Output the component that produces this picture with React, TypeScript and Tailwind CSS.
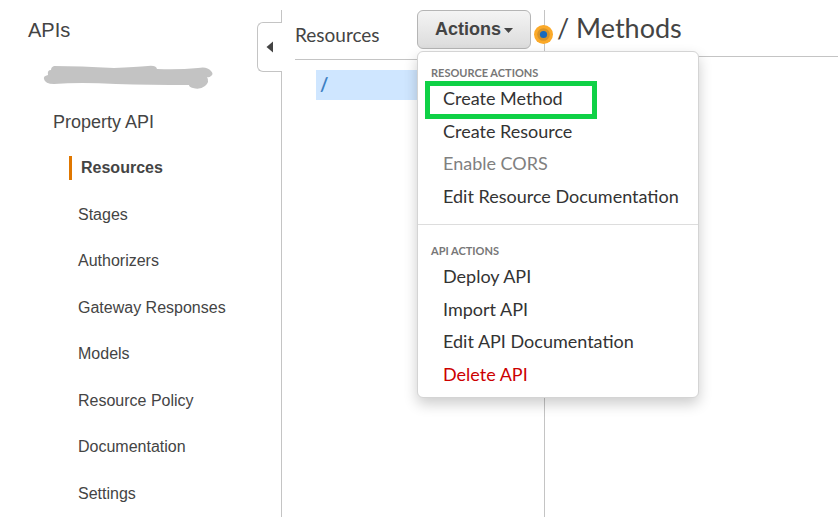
const navItems = [
  'Resources',
  'Stages',
  'Authorizers',
  'Gateway Responses',
  'Models',
  'Resource Policy',
  'Documentation',
  'Settings',
];

type MenuItem = { label: string; tone?: 'disabled' | 'danger'; marked?: boolean };

const menuSections: { title: string; items: MenuItem[] }[] = [
  {
    title: 'RESOURCE ACTIONS',
    items: [
      { label: 'Create Method', marked: true },
      { label: 'Create Resource' },
      { label: 'Enable CORS', tone: 'disabled' },
      { label: 'Edit Resource Documentation' },
    ],
  },
  {
    title: 'API ACTIONS',
    items: [
      { label: 'Deploy API' },
      { label: 'Import API' },
      { label: 'Edit API Documentation' },
      { label: 'Delete API', tone: 'danger' },
    ],
  },
];

function itemColor(tone?: MenuItem['tone']) {
  if (tone === 'disabled') return 'text-[#808080]';
  if (tone === 'danger') return 'text-[#cc0000]';
  return 'text-[#333333]';
}

function Sidebar() {
  return (
    <aside className="relative w-[282px] shrink-0 border-r border-[#c4c4c4] font-['Liberation_Sans',Arial,sans-serif] text-[#444444]">
      <h1 className="pt-2 pl-7 text-xl leading-6">APIs</h1>
      <svg className="mt-5 ml-10 block h-8 w-44" viewBox="0 0 176 32" aria-hidden="true">
        <path
          fill="#c3c3c3"
          d="M14 4 Q40 4 74 6 Q96 5 108 4 Q116 3 117 7 Q138 8 158 6 Q167 4 171 9 Q174 12 171 14 Q169 16 167 15 Q170 20 165 24 Q160 28 153 26 Q149 25 149 23 Q110 23 76 22 Q40 20 14 22 Q5 22 4 17 Q3 14 8 13 Q7 8 11 8 Q11 5 14 4Z"
        />
      </svg>
      <h2 className="mt-4 pl-[53px] text-lg leading-6">Property API</h2>
      <nav aria-label="Property API" className="mt-[22px] pl-[69px]">
        <ul className="flex h-[350px] flex-col justify-between">
          {navItems.map((label, i) => (
            <li key={label}>
              <a
                href="#"
                className={
                  i === 0
                    ? 'block border-l-3 border-[#e07700] pl-[9px] text-base leading-6 font-bold'
                    : 'block pl-[9px] text-base leading-6'
                }
              >
                {label}
              </a>
            </li>
          ))}
        </ul>
      </nav>
      <button
        type="button"
        aria-label="Collapse sidebar"
        className="absolute top-3 -right-px flex h-[50px] w-[25px] items-center rounded-l-md border border-r-0 border-[#c4c4c4] bg-white pl-2"
      >
        <svg className="h-[12px] w-[7px]" viewBox="0 0 7 12" aria-hidden="true">
          <path d="M7 0.5V11.5L0.5 6Z" fill="#444444" />
        </svg>
      </button>
    </aside>
  );
}

function ActionsMenu() {
  return (
    <div className="absolute top-[41px] left-[135px] z-10 w-[282px] rounded-md border border-[#d4d4d4] bg-white pt-[11px] pb-[7px] shadow-[0_6px_14px_rgba(0,0,0,0.2)]">
      {menuSections.map((section, s) => (
        <section
          key={section.title}
          className={s === 0 ? 'pb-3' : 'border-t border-[#dddddd] pt-4'}
        >
          <h3 className="h-[19px] pl-[13px] text-[11px] leading-5 font-bold text-[#777777]">
            {section.title}
          </h3>
          <ul className="grid h-[130px] grid-rows-4">
            {section.items.map((item) => (
              <li key={item.label} className="relative flex items-center">
                <button
                  type="button"
                  disabled={item.tone === 'disabled'}
                  className={`w-full pl-[25px] text-left text-lg leading-6 ${itemColor(item.tone)}`}
                >
                  {item.label}
                </button>
                {item.marked && (
                  <span className="pointer-events-none absolute -top-px left-[7px] h-[38px] w-[172px] border-5 border-[#0fd146]" />
                )}
              </li>
            ))}
          </ul>
        </section>
      ))}
    </div>
  );
}

function ResourcesPanel() {
  return (
    <section className="relative w-[263px] shrink-0 border-r border-[#c4c4c4] pl-[13px]">
      <header className="flex h-[50px] items-start justify-between border-b border-[#c4c4c4]">
        <h2 className="pt-[11px] text-[19px] leading-7">Resources</h2>
        <button
          type="button"
          aria-haspopup="menu"
          aria-expanded="true"
          className="mr-[13px] flex h-[39px] w-[114px] items-center justify-center gap-[3px] rounded-md border border-[#b5b5b5] bg-linear-to-b from-[#f4f4f4] to-[#dcdcdc] pb-0.5 font-['Liberation_Sans',Arial,sans-serif] text-lg font-bold"
        >
          Actions
          <svg className="mt-1 h-[5px] w-[9px]" viewBox="0 0 9 5" aria-hidden="true">
            <path d="M0 0H9L4.5 5Z" fill="#444444" />
          </svg>
        </button>
      </header>
      <a
        href="#"
        className="mt-[10px] ml-[21px] block h-[30px] bg-[#cfe6ff] pl-1 text-lg leading-7 font-bold text-[#3d80c3]"
      >
        /
      </a>
      <ActionsMenu />
      <svg className="absolute top-[15px] -right-[9px] size-[19px]" viewBox="0 0 19 19" aria-hidden="true">
        <circle cx="9.5" cy="9.5" r="9.5" fill="#fba928" />
        <circle cx="9.5" cy="9.5" r="6.3" fill="#d79328" />
        <circle cx="9.5" cy="9.5" r="3.6" fill="#1769bd" />
      </svg>
    </section>
  );
}

export default function App() {
  return (
    <div className="h-screen overflow-hidden bg-white pt-[10px] font-['Lato',sans-serif] text-[#444444]">
      <div className="flex h-full">
        <Sidebar />
        <ResourcesPanel />
        <main className="min-w-0 flex-1">
          <h1 className="h-[47px] border-b border-[#c4c4c4] pl-3 text-[27px] leading-9">
            / Methods
          </h1>
        </main>
      </div>
    </div>
  );
}
